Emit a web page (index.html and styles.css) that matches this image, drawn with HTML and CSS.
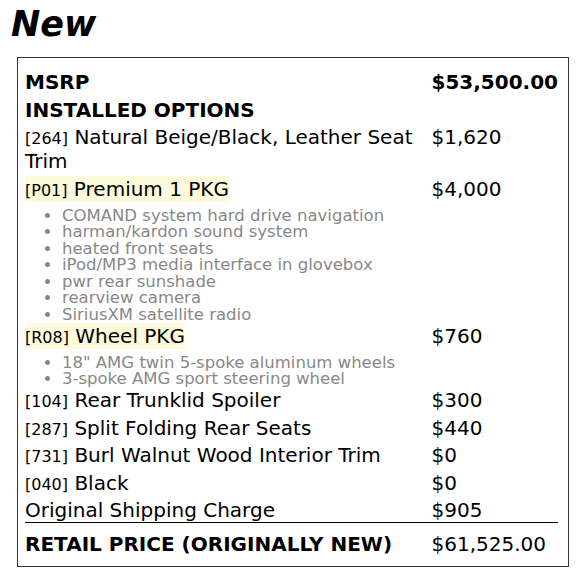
FILE: index.html
```html
<!DOCTYPE html>
<html>
<head>
<meta charset="utf-8">
<link rel="stylesheet" href="styles.css">
</head>
<body>
<h1 class="title">New</h1>
<div class="sticker">
  <table class="prices">
    <tr class="head"><td>MSRP</td><td class="amt">$53,500.00</td></tr>
    <tr class="head"><td colspan="2">INSTALLED OPTIONS</td></tr>
    <tr><td><span class="code">[264]</span> Natural Beige/Black, Leather Seat Trim</td><td class="amt">$1,620</td></tr>
    <tr><td><span class="pkg"><span class="code">[P01]</span> Premium 1 PKG</span>
      <ul class="items">
        <li>COMAND system hard drive navigation</li>
        <li>harman/kardon sound system</li>
        <li>heated front seats</li>
        <li>iPod/MP3 media interface in glovebox</li>
        <li>pwr rear sunshade</li>
        <li>rearview camera</li>
        <li>SiriusXM satellite radio</li>
      </ul></td><td class="amt">$4,000</td></tr>
    <tr><td><span class="pkg"><span class="code">[R08]</span> Wheel PKG</span>
      <ul class="items">
        <li>18" AMG twin 5-spoke aluminum wheels</li>
        <li>3-spoke AMG sport steering wheel</li>
      </ul></td><td class="amt">$760</td></tr>
    <tr><td><span class="code">[104]</span> Rear Trunklid Spoiler</td><td class="amt">$300</td></tr>
    <tr><td><span class="code">[287]</span> Split Folding Rear Seats</td><td class="amt">$440</td></tr>
    <tr><td><span class="code">[731]</span> Burl Walnut Wood Interior Trim</td><td class="amt">$0</td></tr>
    <tr><td><span class="code">[040]</span> Black</td><td class="amt">$0</td></tr>
    <tr><td>Original Shipping Charge</td><td class="amt">$905</td></tr>
    <tr class="total"><td>RETAIL PRICE (ORIGINALLY NEW)</td><td class="amt">$61,525.00</td></tr>
  </table>
</div>
</body>
</html>
```
FILE: styles.css
```css
html, body {
  margin: 0;
  padding: 0;
  background: #ffffff;
}
body {
  font-family: "DejaVu Sans", sans-serif;
  color: #000000;
}
.title {
  margin: 0 0 13px 0;
  padding: 4px 0 0 11px;
  font-size: 35px;
  font-weight: bold;
  font-style: italic;
  line-height: 40px;
}
.sticker {
  margin-left: 17px;
  width: 552px;
  box-sizing: border-box;
  border: 1px solid #333333;
  padding: 8.5px 10px 10px 7px;
}
.prices {
  width: 100%;
  border-collapse: collapse;
  font-size: 20px;
}
.prices td {
  padding: 3.5px 0 0 0;
  vertical-align: top;
  line-height: 24px;
}
.prices td.amt {
  width: 125px;
  white-space: nowrap;
}
.head td {
  font-weight: bold;
}
.code {
  font-size: 16px;
  line-height: 16px;
}
.pkg {
  background: #fdfbdc;
  padding: 1px 0;
}
.items {
  margin: 7px 0 -3px 0;
  padding: 0 0 0 37px;
  font-size: 16.5px;
  line-height: 16.5px;
  color: #888888;
}
.total td {
  border-top: 1px solid #000000;
  padding-top: 8.5px;
  font-weight: bold;
}
.total td.amt {
  font-weight: normal;
}
```
